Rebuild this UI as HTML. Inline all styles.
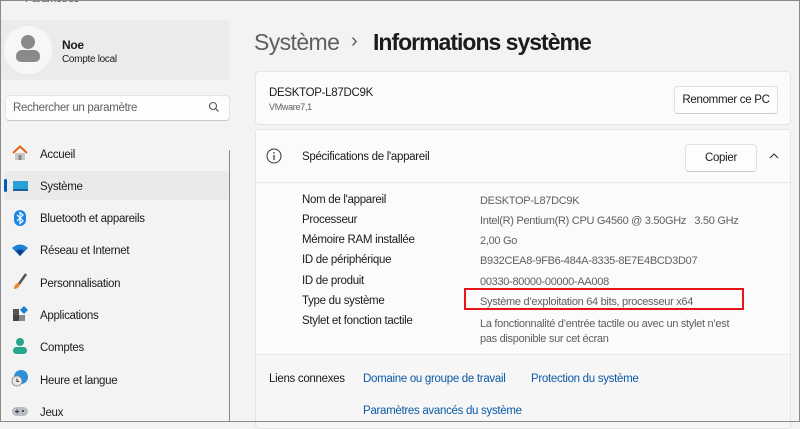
<!DOCTYPE html>
<html><head><meta charset="utf-8"><style>
*{margin:0;padding:0;box-sizing:border-box}
body{width:800px;height:422px;overflow:hidden;background:#f3f3f3;font-family:"Liberation Sans",sans-serif;font-size:11px;letter-spacing:-0.3px;color:#1b1b1b;position:relative}
.frame{position:absolute;inset:0;border:1px solid #8a8a8a;pointer-events:none;z-index:9}
.abs{position:absolute}
.t{margin-top:1px}
.nav{position:absolute;left:40px;font-size:11.5px;color:#1b1b1b;margin-top:2px}
.ic{position:absolute;left:11px;width:18px;height:18px}
.card{position:absolute;background:#fbfbfb;border:1px solid #e5e5e5;border-radius:4px}
.btn{position:absolute;background:#fdfdfd;border:1px solid #e0e0e0;border-bottom-color:#ccc;border-radius:4px;font-size:11.5px;text-align:center}
.lab{position:absolute;left:302px;font-size:11.5px;margin-top:1px}
.val{position:absolute;left:480px;font-size:11px;color:#5f5f5f;margin-top:2px}
.lnk{position:absolute;color:#0c5aa6;font-size:11.5px;margin-top:1px}
</style></head><body>
<div class="frame"></div>
<div class="abs" style="left:8px;top:-7px;color:#555;font-size:11px">‹&nbsp;&nbsp;&nbsp;&nbsp;&nbsp;Paramètres</div>
<div class="abs" style="left:0;top:20px;width:230px;height:60px;background:#ebebeb;border-radius:4px"></div>
<div class="abs" style="left:4px;top:26px;width:48px;height:48px;border-radius:50%;background:#f7f7f7"></div>
<div class="abs" style="left:21px;top:35px;width:14px;height:14px;border-radius:50%;background:#8a8a8a"></div>
<div class="abs" style="left:16px;top:50px;width:24px;height:12px;border-radius:6px 6px 5px 5px;background:#8a8a8a"></div>
<div class="abs" style="left:62px;top:38px;font-size:12px;font-weight:bold;color:#1b1b1b">Noe</div>
<div class="abs" style="left:62px;top:54px;font-size:10px">Compte local</div>
<div class="abs" style="left:5px;top:95px;width:225px;height:26px;background:#fdfdfd;border:1px solid #e3e3e3;border-bottom-color:#c9c9c9;border-radius:4px"></div>
<div class="abs" style="left:13px;top:102px;color:#5f5f5f;font-size:11.5px">Rechercher un paramètre</div>
<svg class="abs" style="left:208px;top:101px" width="12" height="12" viewBox="0 0 12 12"><circle cx="5" cy="5" r="3.5" fill="none" stroke="#555" stroke-width="1.1"/><path d="M7.6 7.6L10.5 10.5" stroke="#555" stroke-width="1.2"/></svg>
<div class="abs" style="left:229px;top:150px;width:1px;height:272px;background:#8a8a8a"></div>
<div class="abs" style="left:4px;top:171px;width:225px;height:29px;background:#eaeaea;border-radius:4px"></div>
<div class="abs" style="left:4px;top:179px;width:3px;height:13px;background:#005fb8;border-radius:2px"></div>
<svg class="ic" style="top:144px" viewBox="0 0 18 18"><path d="M2 9L9 2.5 16 9" fill="none" stroke="#e2611d" stroke-width="2"/><rect x="4" y="9" width="10" height="7" fill="#c9c9c9"/><rect x="7.5" y="11" width="3" height="5" fill="#888"/></svg>
<div class="nav" style="top:147px">Accueil</div>
<svg class="ic" style="top:177px" viewBox="0 0 18 18"><rect x="2" y="4" width="15" height="9" fill="#2aa0d8"/><rect x="2" y="12" width="15" height="2" fill="#1a5f9a"/></svg>
<div class="nav" style="top:179px">Système</div>
<svg class="ic" style="top:209px" viewBox="0 0 18 18"><rect x="3" y="1" width="12" height="16" rx="6" fill="#1b88e8"/><path d="M6 6l6 6-3 2.5V3.5l3 2.5-6 6" fill="none" stroke="#fff" stroke-width="1.2"/></svg>
<div class="nav" style="top:211px">Bluetooth et appareils</div>
<svg class="ic" style="top:241px" viewBox="0 0 18 18"><path d="M1 7Q9 0 17 7L9 15Z" fill="#1b7fd8"/><path d="M5 10Q9 7 13 10L9 15Z" fill="#0d3f8a"/></svg>
<div class="nav" style="top:243px">Réseau et Internet</div>
<svg class="ic" style="top:273px" viewBox="0 0 18 18"><path d="M15 1L8 11" stroke="#555" stroke-width="2.5"/><path d="M7 10Q3 11 3 16Q7 16 9 12Z" fill="#f0892f"/></svg>
<div class="nav" style="top:276px">Personnalisation</div>
<svg class="ic" style="top:305px" viewBox="0 0 18 18"><rect x="2" y="4" width="6" height="6" fill="#555"/><rect x="2" y="10" width="6" height="6" fill="#444"/><rect x="8" y="10" width="6" height="6" fill="#888"/><path d="M13 1l4 4-4 4-4-4z" fill="#1b7fd8"/></svg>
<div class="nav" style="top:308px">Applications</div>
<svg class="ic" style="top:337px" viewBox="0 0 18 18"><circle cx="9" cy="5" r="4" fill="#25a78f"/><rect x="2" y="10" width="14" height="7" rx="3.5" fill="#25a78f"/></svg>
<div class="nav" style="top:340px">Comptes</div>
<svg class="ic" style="top:369px" viewBox="0 0 18 18"><circle cx="10" cy="8" r="7" fill="#2b8fd8"/><circle cx="6" cy="12" r="5" fill="#e8e8e8" stroke="#888" stroke-width=".8"/><path d="M6 9.5v3h2" fill="none" stroke="#333" stroke-width="1"/></svg>
<div class="nav" style="top:373px">Heure et langue</div>
<svg class="ic" style="top:402px" viewBox="0 0 18 18"><rect x="1" y="5" width="16" height="9" rx="4.5" fill="#b8bcc4"/><path d="M4 9.5h4M6 7.5v4" stroke="#333" stroke-width="1"/><circle cx="12" cy="9" r="1" fill="#333"/></svg>
<div class="nav" style="top:405px">Jeux</div>

<div class="abs" style="left:254px;top:29px;font-size:23px;letter-spacing:-0.6px;color:#5f5f5f">Système</div>
<div class="abs" style="left:351px;top:30px;font-size:20px;color:#5f5f5f">›</div>
<div class="abs" style="left:373px;top:29px;font-size:23px;color:#1b1b1b;font-weight:bold;letter-spacing:-1px">Informations système</div>

<div class="card" style="left:255px;top:71px;width:536px;height:54px"></div>
<div class="abs" style="left:269px;top:87px;font-size:11.5px">DESKTOP-L87DC9K</div>
<div class="abs" style="left:269px;top:102px;font-size:9px;color:#5f5f5f">VMware7,1</div>
<div class="btn" style="left:674px;top:86px;width:104px;height:28px;line-height:26px">Renommer ce PC</div>

<div class="card" style="left:255px;top:129px;width:536px;height:300px;background:#f6f6f6"></div>
<div class="abs" style="left:256px;top:130px;width:534px;height:53px;background:#fbfbfb;border-bottom:1px solid #e8e8e8"></div>
<svg class="abs" style="left:266px;top:148px" width="16" height="16" viewBox="0 0 16 16"><circle cx="8" cy="8" r="7" fill="none" stroke="#333" stroke-width="1"/><path d="M8 7v5" stroke="#333" stroke-width="1.2"/><circle cx="8" cy="4.8" r=".8" fill="#333"/></svg>
<div class="abs" style="left:302px;top:151px;font-size:11.5px">Spécifications de l'appareil</div>
<div class="btn" style="left:685px;top:144px;width:72px;height:28px;line-height:26px">Copier</div>
<svg class="abs" style="left:768px;top:152px" width="12" height="8" viewBox="0 0 12 8"><path d="M2 6l4-4 4 4" fill="none" stroke="#333" stroke-width="1.1"/></svg>
<div class="abs" style="left:256px;top:184px;width:534px;height:171px;background:#fbfbfb;border-bottom:1px solid #e8e8e8"></div>
<div class="lab" style="top:193px">Nom de l'appareil</div><div class="val" style="top:193px">DESKTOP-L87DC9K</div>
<div class="lab" style="top:213px">Processeur</div><div class="val" style="top:213px">Intel(R) Pentium(R) CPU G4560 @ 3.50GHz &nbsp; 3.50 GHz</div>
<div class="lab" style="top:233px">Mémoire RAM installée</div><div class="val" style="top:233px">2,00 Go</div>
<div class="lab" style="top:253px">ID de périphérique</div><div class="val" style="top:253px">B932CEA8-9FB6-484A-8335-8E7E4BCD3D07</div>
<div class="lab" style="top:274px">ID de produit</div><div class="val" style="top:274px">00330-80000-00000-AA008</div>
<div class="lab" style="top:294px">Type du système</div><div class="val" style="top:294px">Système d’exploitation 64 bits, processeur x64</div>
<div class="abs" style="left:464px;top:288px;width:280px;height:22px;border:2px solid #e8141a"></div>
<div class="lab" style="top:314px">Stylet et fonction tactile</div>
<div class="val" style="top:315px;line-height:15px">La fonctionnalité d’entrée tactile ou avec un stylet n’est<br>pas disponible sur cet écran</div>
<div class="abs" style="left:269px;top:373px;font-size:11.5px">Liens connexes</div>
<div class="lnk" style="left:363px;top:372px">Domaine ou groupe de travail</div>
<div class="lnk" style="left:531px;top:372px">Protection du système</div>
<div class="lnk" style="left:363px;top:404px">Paramètres avancés du système</div>
</body></html>
